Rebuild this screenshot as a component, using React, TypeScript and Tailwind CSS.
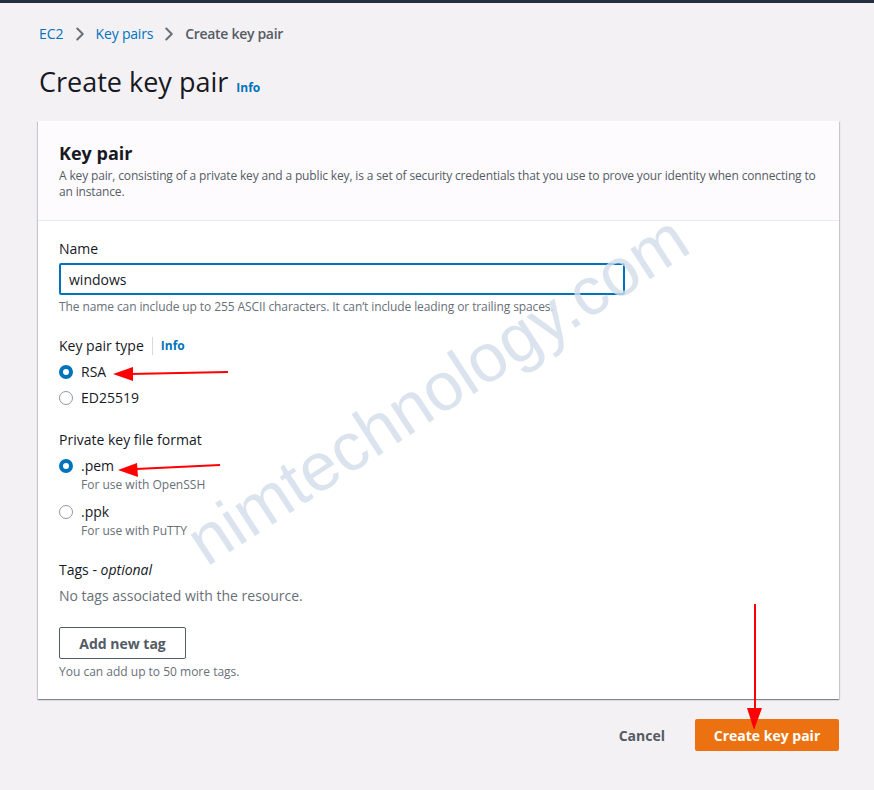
import { ChevronRight } from "lucide-react";

const font = { fontFamily: '"Open Sans", "Noto Sans", sans-serif' };

function Radio({ checked, label, sub }: { checked?: boolean; label: string; sub?: string }) {
  return (
    <div className="flex items-start gap-2">
      <span className="mt-[3px] flex h-[14px] w-[14px] shrink-0 items-center justify-center">
        {checked ? (
          <span className="h-[14px] w-[14px] rounded-full border-[4px] border-[#0073bb] bg-white" />
        ) : (
          <span className="h-[14px] w-[14px] rounded-full border-[1.5px] border-[#8d99a8] bg-white" />
        )}
      </span>
      <div className="flex flex-col">
        <span className="text-[14px] leading-5 text-[#16191f]">{label}</span>
        {sub && <span className="mt-[1px] text-[12px] leading-4 text-[#687078]">{sub}</span>}
      </div>
    </div>
  );
}

function Annotations() {
  return (
    <svg className="pointer-events-none absolute inset-0" width="874" height="790">
      <g stroke="#ff0000" strokeWidth="2" fill="#ff0000">
        <line x1="228" y1="372" x2="130" y2="374" />
        <polygon points="113,374 133,367 133,381" stroke="none" />
        <line x1="220" y1="465" x2="136" y2="469" />
        <polygon points="118,470 137,463 138,477" stroke="none" />
        <line x1="755" y1="604" x2="755" y2="710" />
        <polygon points="754,730 747,708 762,708" stroke="none" />
      </g>
    </svg>
  );
}

function Watermark() {
  return (
    <div
      className="pointer-events-none absolute left-[437px] top-[389px] -translate-x-1/2 -translate-y-1/2 -rotate-[33deg] whitespace-nowrap text-[68px] leading-none text-[#d3deea] opacity-80"
      style={{ fontFamily: '"Liberation Sans", Arial, sans-serif' }}
    >
      nimtechnology.com
    </div>
  );
}

export default function App() {
  return (
    <div className="relative min-h-[790px] w-[874px] overflow-hidden bg-[#f4f1f5]" style={font}>
      <div className="h-[3px] bg-[#232f3e]" />

      <nav className="flex h-5 items-center gap-[5px] pl-[39px] mt-[21px] text-[14px] leading-5">
        <span className="text-[#0073bb]">EC2</span>
        <ChevronRight size={22} strokeWidth={2.2} className="-my-[1px] text-[#687078]" />
        <span className="tracking-[-0.2px] text-[#0073bb]">Key pairs</span>
        <ChevronRight size={22} strokeWidth={2.2} className="-my-[1px] text-[#687078]" />
        <span className="tracking-[-0.3px] font-semibold text-[#545b64]">Create key pair</span>
      </nav>

      <div className="mt-[20px] flex h-9 items-baseline gap-2 pl-[39px]">
        <h1 className="text-[27px] leading-9 text-[#16191f]">Create key pair</h1>
        <span className="text-[12px] font-bold text-[#0073bb]">Info</span>
      </div>

      <div className="ml-[38px] mt-[21px] w-[801px] bg-white shadow-[0_1px_1px_0_rgba(0,28,36,0.3),1px_1px_1px_0_rgba(0,28,36,0.15),-1px_1px_1px_0_rgba(0,28,36,0.15)]">
        <div className="border-b border-[#eaeded] bg-[#fdfbfe] px-[21px] pb-[20px] pt-[20px]">
          <h2 className="text-[18px] font-bold leading-6 text-[#16191f]">Key pair</h2>
          <p className="mt-[3px] text-[12px] leading-4 tracking-[-0.15px] text-[#545b64]">
            A key pair, consisting of a private key and a public key, is a set of security credentials that you use
            to prove your identity when connecting to an instance.
          </p>
        </div>

        <div className="px-[21px] pb-[19px] pt-[18px]">
          <div className="text-[14px] leading-5 text-[#16191f]">Name</div>
          <div className="mt-[4px] flex h-[32px] w-[566px] items-center rounded-[2px] border-2 border-[#0073bb] px-[8px] text-[14px] text-[#16191f]">
            windows
          </div>
          <p className="mt-[4px] text-[12px] leading-4 tracking-[-0.1px] text-[#687078]">
            The name can include up to 255 ASCII characters. It can’t include leading or trailing spaces.
          </p>

          <div className="mt-[21px] flex items-center text-[14px] leading-5 text-[#16191f]">
            <span>Key pair type</span>
            <span className="mx-[8px] h-[18px] w-px bg-[#d5dbdb]" />
            <span className="text-[12px] font-bold text-[#0073bb]">Info</span>
          </div>
          <div className="mt-[6px] flex flex-col gap-[6px]">
            <Radio checked label="RSA" />
            <Radio label="ED25519" />
          </div>

          <div className="mt-[22px] text-[14px] leading-5 text-[#16191f]">Private key file format</div>
          <div className="mt-[6px] flex flex-col gap-[9px]">
            <Radio checked label=".pem" sub="For use with OpenSSH" />
            <Radio label=".ppk" sub="For use with PuTTY" />
          </div>

          <div className="mt-[21px] text-[14px] leading-5 text-[#16191f]">
            Tags - <i>optional</i>
          </div>
          <div className="mt-[6px] text-[14px] leading-5 text-[#687078]">No tags associated with the resource.</div>
          <button className="mt-[21px] h-[32px] w-[127px] rounded-[2px] border border-[#545b64] bg-white text-[14px] font-bold text-[#545b64]">
            Add new tag
          </button>
          <p className="mt-[5px] text-[12px] leading-4 text-[#687078]">You can add up to 50 more tags.</p>
        </div>
      </div>

      <div className="mt-[20px] flex w-[839px] items-center justify-end gap-[10px]">
        <button className="h-[32px] px-[20px] text-[14px] font-bold text-[#545b64]">Cancel</button>
        <button className="h-[32px] w-[144px] rounded-[2px] bg-[#ec7211] text-[14px] font-bold text-white">
          Create key pair
        </button>
      </div>

      <Watermark />
      <Annotations />
    </div>
  );
}
